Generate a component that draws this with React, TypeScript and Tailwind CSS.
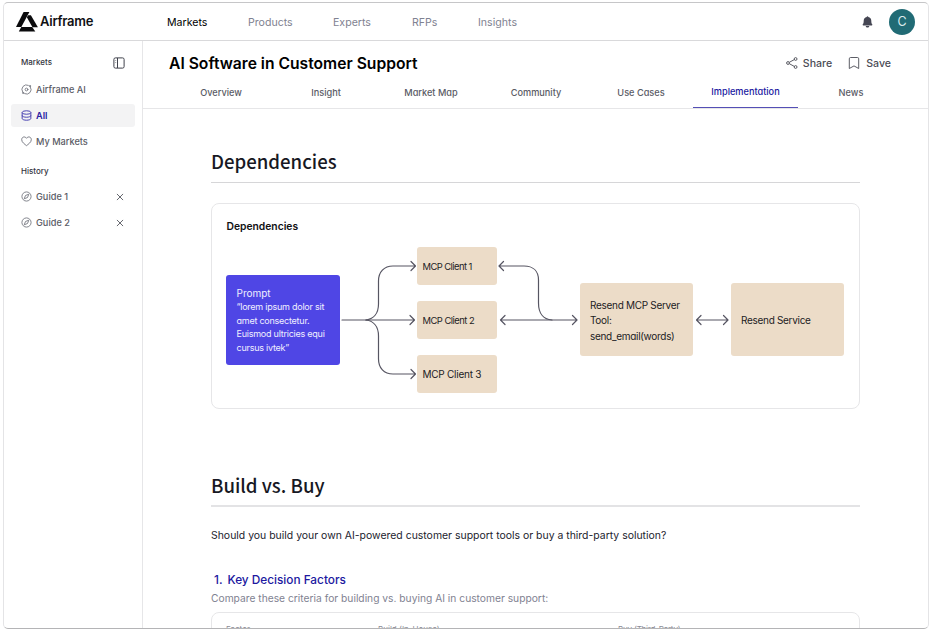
import React from "react";

const navItems = [
  { label: "Markets", cls: "w-[81px] text-black" },
  { label: "Products", cls: "w-[85px] text-[#7f8291]" },
  { label: "Experts", cls: "w-[79px] text-[#7f8291]" },
  { label: "RFPs", cls: "w-[66px] text-[#7f8291]" },
  { label: "Insights", cls: "text-[#7f8291]" },
];

const tabs = ["Overview", "Insight", "Market Map", "Community", "Use Cases", "Implementation", "News"];

function Logo() {
  return (
    <svg width="22" height="20" viewBox="0 0 22 20" fill="#0b0b0d">
      <path d="M7.600 0H13.400L5.300 15H0Z" />
      <path d="M10.800 5.200L12.200 3.200H14.900L21.900 15.200H16.500Z" />
      <path d="M5.300 15.100H16.200L19.300 19.600H2.800Z" />
    </svg>
  );
}

function CompassIcon() {
  return (
    <svg width="11" height="11" viewBox="0 0 24 24" fill="none" stroke="#71737d" strokeWidth="1.9" strokeLinejoin="round">
      <circle cx="12" cy="12" r="10" />
      <path d="M17 7L14.2 14.2L7 17L9.8 9.8Z" />
    </svg>
  );
}

function OrbitIcon() {
  return (
    <svg width="11" height="11" viewBox="0 0 24 24" fill="none" stroke="#71737d" strokeWidth="1.9" strokeLinecap="round">
      <path d="M16 2.800A10 10 0 0 0 3.500 17.300M8 21.200A10 10 0 0 0 20.500 6.700" />
      <circle cx="12" cy="12" r="3" />
      <circle cx="19.500" cy="4.500" r="1.300" />
      <circle cx="4.500" cy="19.500" r="1.300" />
    </svg>
  );
}

function DatabaseIcon() {
  return (
    <svg width="11" height="11" viewBox="0 0 24 24" fill="none" stroke="#3a33ad" strokeWidth="2">
      <ellipse cx="12" cy="5.500" rx="9.500" ry="3.800" />
      <path d="M2.500 5.500V18.500C2.500 20.600 6.800 22.300 12 22.300S21.500 20.600 21.500 18.500V5.500M2.500 12C2.500 14.100 6.800 15.800 12 15.800S21.500 14.100 21.500 12" />
    </svg>
  );
}

function HeartIcon() {
  return (
    <svg width="11" height="11" viewBox="0 0 24 24" fill="none" stroke="#71737d" strokeWidth="2" strokeLinejoin="round">
      <path d="M12 21C9 18.500 1.500 14 1.500 8C1.500 4.500 4 2 7 2C9.200 2 11 3.200 12 5.100C13 3.200 14.800 2 17 2C20 2 22.500 4.500 22.500 8C22.500 14 15 18.500 12 21Z" />
    </svg>
  );
}

function PanelIcon() {
  return (
    <svg width="12" height="12" viewBox="0 0 12 12" fill="none" stroke="#3f414b" strokeWidth="1">
      <rect x="0.900" y="0.900" width="10.200" height="10.200" rx="1.500" />
      <path d="M4.500 1V11" />
      <path d="M2.200 3.500H3.200M2.200 5.500H3.200" strokeWidth="0.500" />
    </svg>
  );
}

function CloseIcon() {
  return (
    <svg width="8" height="8" viewBox="0 0 8 8" stroke="#55575f" strokeWidth="0.900" strokeLinecap="round">
      <path d="M1.200 1.200L6.800 6.800M6.800 1.200L1.200 6.800" />
    </svg>
  );
}

function BellIcon() {
  return (
    <svg width="11" height="12" viewBox="0 0 11 12" fill="#454653">
      <path d="M5.500 0.300C6 0.300 6.300 0.600 6.300 1C8.200 1.400 9.300 2.900 9.300 4.700C9.300 6.600 9.600 7.500 10.200 8.300C10.600 8.800 10.300 9.400 9.800 9.400H1.200C0.700 9.400 0.400 8.800 0.800 8.300C1.400 7.500 1.700 6.600 1.700 4.700C1.700 2.900 2.800 1.400 4.700 1C4.700 0.600 5 0.300 5.500 0.300Z" />
      <path d="M3.700 9.900H7.300C7.100 10.900 6.400 11.500 5.500 11.500S3.900 10.900 3.700 9.900Z" />
    </svg>
  );
}

function ShareIcon() {
  return (
    <svg width="12" height="12" viewBox="0 0 12 12" fill="none" stroke="#4b4c55" strokeWidth="0.900">
      <circle cx="2" cy="6" r="1.400" />
      <circle cx="9.600" cy="2" r="1.400" />
      <circle cx="9.600" cy="10" r="1.400" />
      <path d="M3.300 5.300L8.300 2.600M3.300 6.700L8.300 9.400" />
    </svg>
  );
}

function BookmarkIcon() {
  return (
    <svg width="12" height="12" viewBox="0 0 12 12" fill="none" stroke="#4b4c55" strokeWidth="0.900" strokeLinejoin="round">
      <path d="M1.300 1.800A1.300 1.300 0 0 1 2.600 0.500H9.400A1.300 1.300 0 0 1 10.700 1.800V11.500L6 8.900L1.300 11.500Z" />
    </svg>
  );
}

function SideRow({ icon, label, active, closable }: { icon: React.ReactNode; label: string; active?: boolean; closable?: boolean }) {
  return (
    <div className={`flex h-[23px] items-center rounded-[3px] pr-[11px] pl-[10px] ${active ? "bg-[#f3f3f4] font-semibold text-[#2a22a3]" : "font-medium text-[#5a5b65]"}`}>
      {icon}
      <span className="ml-[4px] flex-1 pt-px text-[9.200px]">{label}</span>
      {closable && <CloseIcon />}
    </div>
  );
}

function Connectors() {
  return (
    <svg className="absolute inset-0" width="647" height="204" viewBox="212 204 647 204" fill="none" stroke="#565562" strokeWidth="1.200" strokeLinecap="round" strokeLinejoin="round">
      <path d="M342 320H414M410 315.500L414.500 320L410 324.500" />
      <path d="M366 320C373 319 378.500 314 378.500 304V281C378.500 272 384 266 393 266H415.500M411 261.500L415.500 266L411 270.500" />
      <path d="M366 320C373 321 378.500 326 378.500 336V359C378.500 368 384 374 393 374H415.500M411 369.500L415.500 374L411 378.500" />
      <path d="M503.500 261.500L499 266L503.500 270.500M499 266H524C533 266 538.500 271 538.500 280V303C538.500 314 544 319.500 552 320" />
      <path d="M505 315.500L500.500 320L505 324.500M500.500 320H577M572.500 315.500L577 320L572.500 324.500" />
      <path d="M701 315.500L696.500 320L701 324.500M696.500 320H728M723.500 315.500L728 320L723.500 324.500" />
    </svg>
  );
}

export default function App() {
  return (
    <div className="h-[631px] w-[930px] overflow-hidden bg-white pt-[2px] pl-[3px] font-[Inter,sans-serif]">
      <div className="flex h-[627px] w-[926px] flex-col overflow-hidden rounded-[5px] border border-[#e4e4e6] border-t-[#c6c6c8] border-b-[#b4b4b6]">
        <header className="flex h-[38px] shrink-0 items-center border-b border-[#d9d9db] pl-[12px]">
          <Logo />
          <span className="ml-[2px] w-[127px] pt-px text-[13px] font-semibold tracking-[-0.020em] text-[#111114]">Airframe</span>
          <nav className="flex flex-1 pt-[2px] text-[10.600px]">
            {navItems.map((n) => (
              <span key={n.label} className={n.cls}>{n.label}</span>
            ))}
          </nav>
          <BellIcon />
          <div className="mr-[13px] ml-[16px] flex size-[26px] items-center justify-center rounded-full bg-[#216b75] pt-px text-[12.500px] text-[#dcebed]">C</div>
        </header>

        <div className="flex min-h-0 flex-1">
          <aside className="w-[139px] shrink-0 border-r border-[#e6e6e8] px-[7px]">
            <div className="mt-[15px] flex h-[14px] items-center justify-between pr-[10px] pl-[10px] text-[8px] font-medium text-[#33343e]">
              <span className="-mt-[2px]">Markets</span>
              <PanelIcon />
            </div>
            <div className="mt-[8px] flex flex-col gap-[3px]">
              <SideRow icon={<OrbitIcon />} label="Airframe AI" />
              <SideRow icon={<DatabaseIcon />} label="All" active />
              <SideRow icon={<HeartIcon />} label="My Markets" />
            </div>
            <div className="mt-[11px] pl-[10px] text-[8px] leading-[14px] font-medium text-[#33343e]">History</div>
            <div className="mt-[7px] flex flex-col gap-[3px]">
              <SideRow icon={<CompassIcon />} label="Guide 1" closable />
              <SideRow icon={<CompassIcon />} label="Guide 2" closable />
            </div>
          </aside>

          <main className="flex min-w-0 flex-1 flex-col">
            <div className="flex h-[43px] shrink-0 items-center pt-[2px] pr-[37px] pl-[26px]">
              <h1 className="flex-1 text-[15.660px] font-semibold text-black">AI Software in Customer Support</h1>
              <div className="flex items-center text-[10.600px] font-medium text-[#4b4c55]">
                <ShareIcon />
                <span className="ml-[5px] pt-px">Share</span>
                <span className="ml-[16px]"><BookmarkIcon /></span>
                <span className="ml-[6px] pt-px">Save</span>
              </div>
            </div>
            <div className="flex h-[25px] shrink-0 border-b border-[#e6e6e8] pl-[25px] text-[9.200px] font-medium text-[#5a5b65] [font-feature-settings:'cv11']">
              {tabs.map((t) => (
                <div key={t} className={`flex h-[24px] w-[105px] shrink-0 justify-center ${t === "Implementation" ? "border-b border-[#544fb5] leading-[16px] text-[#2018a0]" : "pl-px leading-[18px]"}`}>{t}</div>
              ))}
            </div>

            <div className="ml-[68px] w-[649px] pt-[39px]">
              <h2 className="h-[35px] border-b-[1.500px] border-[#d6d6d8] font-['Noto_Sans_CJK_SC',sans-serif] text-[18.600px] leading-[25px] font-medium text-[#171823]">Dependencies</h2>
              <section className="relative mt-[20px] h-[206px] rounded-[8px] border border-[#e6e6e8] pt-[14px] pr-[14px] pl-[14px]">
                <h3 className="pl-[0.500px] text-[10.300px] leading-[16px] font-semibold text-[#111114]">Dependencies</h3>
                <Connectors />
                <div className="mt-[12px] flex h-[147px] items-center [font-feature-settings:'cv11']">
                  <div className="h-[90px] w-[113.500px] rounded-[3px] bg-[#4f46e5] pt-[12px] pl-[10.500px] text-[9px] leading-[13.500px] tracking-[-0.240px] whitespace-nowrap text-[#f0efff]">
                    <div className="text-[10px] tracking-normal">Prompt</div>
                    <div>“lorem ipsum dolor sit</div>
                    <div>amet consectetur.</div>
                    <div>Euismod ultricies equi</div>
                    <div>cursus ivtek”</div>
                  </div>
                  <div className="ml-[77.500px] flex flex-col gap-[16px] text-[9.400px] tracking-[-0.550px] text-[#22211f]">
                    <div className="flex h-[38px] w-[80px] items-center rounded-[3px] bg-[#ecdcc8] pt-[3px] pl-[5.500px]">MCP Client 1</div>
                    <div className="flex h-[38px] w-[80px] items-center rounded-[3px] bg-[#ecdcc8] pt-[3px] pl-[5.500px] tracking-[-0.500px]">MCP Client 2</div>
                    <div className="flex h-[38px] w-[80px] items-center rounded-[3px] bg-[#ecdcc8] pt-[2px] pl-[5.500px] text-[10px] tracking-[-0.250px]">MCP Client 3</div>
                  </div>
                  <div className="ml-[83px] flex h-[73px] w-[113px] flex-col justify-center rounded-[3px] bg-[#ecdcc8] pt-[3px] pl-[10px] text-[10px] leading-[15.500px] tracking-[-0.300px] text-[#22211f]">
                    <div>Resend MCP Server</div>
                    <div>Tool:</div>
                    <div>send_email(words)</div>
                  </div>
                  <div className="ml-[38px] flex h-[73px] w-[113px] items-center rounded-[3px] bg-[#ecdcc8] pt-[2px] pl-[10px] text-[10px] tracking-[-0.300px] text-[#22211f]">Resend Service</div>
                </div>
              </section>

              <h2 className="mt-[63px] h-[35px] border-b-2 border-[#e3e3e5] font-['Noto_Sans_CJK_SC',sans-serif] text-[18.600px] leading-[25px] font-medium text-[#171823]">Build vs. Buy</h2>
              <p className="mt-[21px] text-[10.440px] leading-[16px] text-[#22232e]">Should you build your own AI-powered customer support tools or buy a third-party solution?</p>
              <h3 className="mt-[28px] flex gap-[5px] pl-[3px] text-[11.800px] leading-[16px] font-medium text-[#2018a0]"><span>1.</span><span>Key Decision Factors</span></h3>
              <p className="mt-[2px] text-[10.260px] leading-[16px] text-[#7f8291]">Compare these criteria for building vs. buying AI in customer support:</p>
              <div className="mt-[6px] flex h-[60px] rounded-t-[8px] border border-[#e6e6e8] pt-[11px] pl-[14px] text-[8px] leading-[10px] text-[#8b8c96]">
                <span className="w-[152px]">Factor</span>
                <span className="w-[240px]">Build (In-House)</span>
                <span className="tracking-[-0.200px]">Buy (Third-Party)</span>
              </div>
            </div>
          </main>
        </div>
      </div>
    </div>
  );
}
